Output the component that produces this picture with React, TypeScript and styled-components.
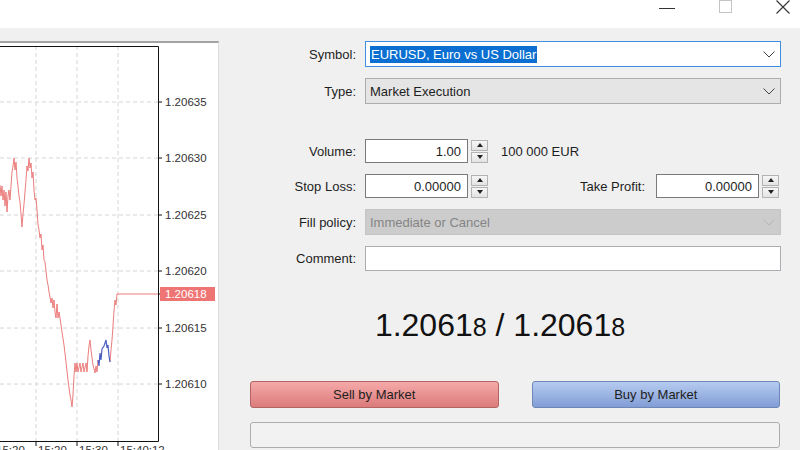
import React, {FC} from 'react';
import styled, {createGlobalStyle} from 'styled-components';

const GlobalStyle = createGlobalStyle`
  html, body {
    margin: 0;
    padding: 0;
    width: 800px;
    height: 450px;
    overflow: hidden;
    background: #f0f0f0;
    font-family: "Liberation Sans", Arial, sans-serif;
  }
`

// tick chart, page coordinates (viewBox starts where the chart starts)
const redTicks: [number, number][] = [
    [0, 185], [1, 196], [2, 186], [3, 200], [4, 190], [5, 206], [6, 192], [7, 212], [8, 196], [9, 190],
    [10, 200], [11, 186], [12, 172], [13, 166], [14, 158], [15, 170], [16, 162], [17, 178], [18, 186],
    [19, 196], [20, 202], [21, 214], [22, 227], [23, 214], [24, 204], [25, 192], [26, 180], [27, 166],
    [28, 171], [29, 158], [30, 168], [31, 163], [32, 178], [33, 172], [34, 190], [35, 200], [36, 198],
    [37, 210], [38, 224], [39, 230], [40, 238], [41, 234], [42, 250], [43, 245], [44, 260], [45, 262],
    [46, 271], [47, 280], [48, 285], [49, 292], [50, 297], [51, 303], [52, 298], [53, 308], [54, 300],
    [55, 312], [56, 318], [57, 304], [58, 318], [59, 312], [60, 318], [62, 332], [64, 345], [66, 362],
    [68, 380], [70, 395], [71, 400], [72, 407], [73, 395], [74, 376], [75, 363], [76, 372], [77, 363],
    [78, 372], [80, 363], [81, 372], [83, 363], [84, 372], [86, 363], [87, 372], [88, 356], [89, 346],
    [90, 340], [91, 350], [93, 365], [95, 373], [96, 366], [97, 372], [98, 360],
]
const blueTicks: [number, number][] = [
    [98, 360], [99, 366], [100, 353], [101, 360], [102, 349], [104, 346], [106, 340], [107, 348],
    [108, 345], [109, 356], [110, 362],
]
const redTail: [number, number][] = [
    [110, 362], [111, 350], [112, 340], [113, 326], [114, 311], [115, 300], [116, 305], [117, 294], [158, 294],
]
const toPath = (pts: [number, number][]) =>
    pts.map(([x, y], i) => `${i ? 'L' : 'M'}${x} ${y}`).join(' ')

const priceLevels = [
    {y: 102, label: '1.20635'},
    {y: 158, label: '1.20630'},
    {y: 215, label: '1.20625'},
    {y: 271, label: '1.20620'},
    {y: 328, label: '1.20615'},
    {y: 384, label: '1.20610'},
]
const timeTicks = [
    {x: 36, label: '15:20'},
    {x: 77, label: '15:30'},
    {x: 118, label: '15:40:12'},
]
const AXIS_FONT = '"Liberation Sans", Arial, sans-serif'

const Chart: FC = () => (
    <ChartPanel>
        <svg width="218" height="420" viewBox="0 43 218 420">
            {timeTicks.map(t =>
                <line key={t.x} x1={t.x} y1={46} x2={t.x} y2={441} stroke="#d6d6d6" strokeDasharray="4 3"/>
            )}
            {priceLevels.map(p =>
                <line key={p.y} x1={0} y1={p.y} x2={158} y2={p.y} stroke="#d6d6d6" strokeDasharray="4 3"/>
            )}
            <path d={toPath(redTicks)} fill="none" stroke="#ec7d7d" strokeWidth="1"/>
            <path d={toPath(redTail)} fill="none" stroke="#ec7d7d" strokeWidth="1"/>
            <path d={toPath(blueTicks)} fill="none" stroke="#4c5ec4" strokeWidth="1.2"/>
            <path d="M0 46.5 H158.5 V441.5 H0" fill="none" stroke="#111" strokeWidth="1"/>
            {priceLevels.map(p =>
                <g key={p.label}>
                    <line x1={158} y1={p.y} x2={162} y2={p.y} stroke="#111"/>
                    <text x={165} y={p.y + 4} fontSize="11.5" fill="#333" fontFamily={AXIS_FONT}>{p.label}</text>
                </g>
            )}
            <line x1={158} y1={294} x2={162} y2={294} stroke="#111"/>
            <rect x={160} y={287} width={55} height={14} fill="#ef7474"/>
            <text x={165} y={298} fontSize="11.5" fill="#fff" fontFamily={AXIS_FONT}>1.20618</text>
            {timeTicks.map(t =>
                <g key={t.label}>
                    <line x1={t.x} y1={441} x2={t.x} y2={446} stroke="#111"/>
                    <text x={t.x + 2} y={454} fontSize="11.5" fill="#333" fontFamily={AXIS_FONT}>{t.label}</text>
                </g>
            )}
            <text x={-4} y={454} fontSize="11.5" fill="#333" fontFamily={AXIS_FONT}>15:20</text>
        </svg>
    </ChartPanel>
)

const Chevron: FC<{ color?: string }> = ({color = '#444'}) => (
    <svg width="12" height="7" viewBox="0 0 12 7">
        <polyline points="0.5,0.5 6,6 11.5,0.5" fill="none" stroke={color} strokeWidth="1"/>
    </svg>
)

const Spinner: FC = () => (
    <SpinBox>
        <SpinBtn><ArrowUp/></SpinBtn>
        <SpinBtn><ArrowDown/></SpinBtn>
    </SpinBox>
)

const App: FC = () => {
    return (
        <>
            <GlobalStyle/>
            <TitleBar>
                <svg width="16" height="10" viewBox="0 0 16 10">
                    <line x1="0" y1="8.5" x2="16" y2="8.5" stroke="#333"/>
                </svg>
                <svg width="13" height="14" viewBox="0 0 13 14">
                    <rect x="0.5" y="0.5" width="12" height="12" fill="none" stroke="#c4c4c4"/>
                </svg>
                <svg width="14" height="15" viewBox="0 0 14 15">
                    <path d="M0.5 0.5 L13.5 13.5 M13.5 0.5 L0.5 13.5" stroke="#333" strokeWidth="1.1"/>
                </svg>
            </TitleBar>
            <Body>
                <Chart/>
                <OrderPanel>
                    <Form>
                        <Label>Symbol:</Label>
                        <Select focused>
                            <Selected>EURUSD, Euro vs US Dollar</Selected>
                            <Chevron/>
                        </Select>
                        <Label>Type:</Label>
                        <Select>
                            <span>Market Execution</span>
                            <Chevron/>
                        </Select>
                        <Spacer/>
                        <Label>Volume:</Label>
                        <FieldRow>
                            <NumInput>1.00</NumInput>
                            <Spinner/>
                            <Hint>100 000 EUR</Hint>
                        </FieldRow>
                        <Label>Stop Loss:</Label>
                        <FieldRow>
                            <NumInput>0.00000</NumInput>
                            <Spinner/>
                            <TakeProfit>
                                <Label>Take Profit:</Label>
                                <NumInput>0.00000</NumInput>
                                <Spinner/>
                            </TakeProfit>
                        </FieldRow>
                        <Label>Fill policy:</Label>
                        <Select disabled>
                            <span>Immediate or Cancel</span>
                            <Chevron color="#b4b4b4"/>
                        </Select>
                        <Label>Comment:</Label>
                        <TextInput/>
                    </Form>
                    <Quote>
                        1.2061<Small>8</Small> / 1.2061<Small>8</Small>
                    </Quote>
                    <Actions>
                        <ActionButton kind="sell">Sell by Market</ActionButton>
                        <ActionButton kind="buy">Buy by Market</ActionButton>
                        <StatusBar/>
                    </Actions>
                </OrderPanel>
            </Body>
        </>
    );
};

export default App;

const TitleBar = styled.div`
  height: 28px;
  background: #fff;
  display: flex;
  justify-content: flex-end;
  align-items: flex-start;
  gap: 44px;
  padding-right: 10px;

  svg {
    display: block;
  }
`
const Body = styled.div`
  display: flex;
  height: 422px;
`
const ChartPanel = styled.div`
  width: 218px;
  flex-shrink: 0;
  margin-top: 13px;
  background: #fff;
  border-top: 2px solid #a3a3a3;
  border-right: 1px solid #dcdcdc;
  overflow: hidden;

  svg {
    display: block;
  }
`
const OrderPanel = styled.div`
  flex: 1;
  display: flex;
  flex-direction: column;
  padding: 13px 19px 0 0;
`
const Form = styled.div`
  display: grid;
  grid-template-columns: 137px 1fr;
  column-gap: 9px;
  row-gap: 11px;
  align-items: center;
`
const Label = styled.span`
  text-align: right;
  font-size: 13px;
  color: #1e1e1e;
  white-space: nowrap;
`

interface ISelect {
    focused?: boolean
    disabled?: boolean
}

const Select = styled.div<ISelect>`
  height: 26px;
  box-sizing: border-box;
  display: flex;
  align-items: center;
  justify-content: space-between;
  padding: 0 5px 0 4px;
  font-size: 13px;
  border: 1px solid ${p => p.focused ? '#3d8ee0' : p.disabled ? '#c4c4c4' : '#adadad'};
  background: ${p => p.focused ? '#fff' : p.disabled ? '#cccccc' : '#e5e5e5'};
  color: ${p => p.disabled ? '#858585' : '#1e1e1e'};
`
const Selected = styled.span`
  background: #0a6fd1;
  color: #fff;
  padding: 1px 1px;
`
const Spacer = styled.div`
  grid-column: 1 / -1;
  height: 13px;
`
const FieldRow = styled.div`
  display: flex;
  align-items: center;
  height: 24px;
`
const NumInput = styled.div`
  width: 103px;
  height: 24px;
  box-sizing: border-box;
  border: 1px solid #7a7a7a;
  background: #fff;
  font-size: 13px;
  color: #1e1e1e;
  display: flex;
  align-items: center;
  justify-content: flex-end;
  padding-right: 6px;
`
const SpinBox = styled.div`
  width: 17px;
  height: 23px;
  margin-left: 3px;
  display: flex;
  flex-direction: column;
  gap: 1px;
`
const SpinBtn = styled.div`
  flex: 1;
  border: 1px solid #b3b3b3;
  background: linear-gradient(#f6f6f6, #e3e3e3);
  display: flex;
  align-items: center;
  justify-content: center;
`
const ArrowUp = styled.div`
  width: 0;
  height: 0;
  border-left: 3px solid transparent;
  border-right: 3px solid transparent;
  border-bottom: 4px solid #222;
`
const ArrowDown = styled(ArrowUp)`
  border-bottom: none;
  border-top: 4px solid #222;
`
const Hint = styled.span`
  margin-left: 13px;
  font-size: 13px;
  color: #1e1e1e;
`
const TakeProfit = styled.div`
  margin-left: auto;
  margin-right: 2px;
  display: flex;
  align-items: center;

  ${Label} {
    margin-right: 11px;
  }
`
const TextInput = styled.div`
  height: 25px;
  box-sizing: border-box;
  border: 1px solid #abadb3;
  background: #fff;
`
const Quote = styled.div`
  margin-top: 29px;
  height: 50px;
  line-height: 50px;
  text-align: center;
  font-size: 32px;
  color: #111;
  white-space: pre;
`
const Small = styled.span`
  font-size: 25px;
`
const Actions = styled.div`
  margin-top: 31px;
  padding: 0 1px 0 31px;
  display: grid;
  grid-template-columns: 1fr 1fr;
  column-gap: 33px;
  row-gap: 14px;
`

interface IActionButton {
    kind: 'sell' | 'buy'
}

const ActionButton = styled.div<IActionButton>`
  height: 27px;
  box-sizing: border-box;
  border-radius: 3px;
  border: 1px solid ${p => p.kind === 'sell' ? '#b36464' : '#6f86b8'};
  background: ${p => p.kind === 'sell'
          ? 'linear-gradient(#f5a9a9, #dc7b7b)'
          : 'linear-gradient(#b6cbf0, #819dd5)'};
  display: flex;
  align-items: center;
  justify-content: center;
  font-size: 13px;
  color: #1e1e1e;
`
const StatusBar = styled.div`
  grid-column: 1 / -1;
  height: 26px;
  box-sizing: border-box;
  border: 1px solid #adadad;
  border-radius: 3px;
  background: #f2f2f2;
`
